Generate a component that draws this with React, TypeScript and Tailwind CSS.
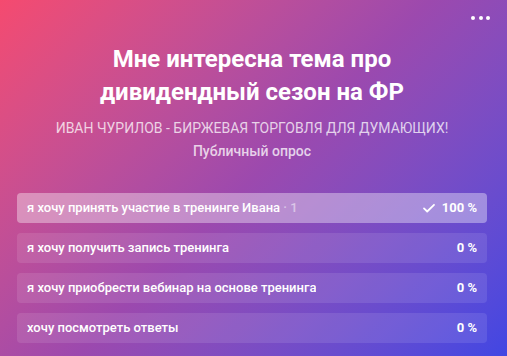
const OPTIONS: Array<{ text: string; votes?: number; percent: number; chosen?: boolean }> = [
  { text: "я хочу принять участие в тренинге Ивана", votes: 1, percent: 100, chosen: true },
  { text: "я хочу получить запись тренинга", percent: 0 },
  { text: "я хочу приобрести вебинар на основе тренинга", percent: 0 },
  { text: "хочу посмотреть ответы", percent: 0 },
];

function CheckIcon() {
  return (
    <svg width="14" height="14" viewBox="0 0 14 14" fill="none" className="shrink-0">
      <path d="M2 7.4l3.2 3.1L12 3.8" stroke="white" strokeWidth="1.8" strokeLinecap="round" strokeLinejoin="round" />
    </svg>
  );
}

export default function App() {
  return (
    <div
      className="relative flex h-[356px] w-[507px] flex-col overflow-hidden bg-linear-135 from-[#f54a6f] via-[#9c49ae] to-[#4146e3] pl-[17px] pr-[20px] text-white"
      style={{ fontFamily: "Roboto, 'Noto Sans', sans-serif" }}
    >
      {/* menu */}
      <button className="absolute right-[17px] top-[16px] flex gap-[3.5px]">
        <span className="h-[4px] w-[4px] rounded-full bg-white" />
        <span className="h-[4px] w-[4px] rounded-full bg-white" />
        <span className="h-[4px] w-[4px] rounded-full bg-white" />
      </button>

      <div className="flex flex-col items-center pt-[43px] text-center">
        <h1 className="text-[24px] font-bold leading-[33px]">
          Мне интересна тема про
          <br />
          дивидендный сезон на ФР
        </h1>
        <p className="mt-[10px] text-[14px] leading-[18px] text-white/75">
          ИВАН ЧУРИЛОВ - БИРЖЕВАЯ ТОРГОВЛЯ ДЛЯ ДУМАЮЩИХ!
        </p>
        <p className="mt-[5px] text-[14px] font-medium leading-[18px] text-white/75">Публичный опрос</p>
      </div>

      <div className="mt-[33px] flex flex-col gap-[10px]">
        {OPTIONS.map((o, i) => (
          <div key={i} className="relative h-[30px] overflow-hidden rounded-[4px] bg-white/10">
            <div
              className="absolute inset-y-0 left-0 bg-white/30"
              style={{ width: `${o.percent}%` }}
            />
            <div className="relative flex h-full items-center justify-between px-[10px] text-[13px] font-medium">
              <span className="truncate">
                {o.text}
                {o.votes !== undefined && <span className="text-white/50"> · {o.votes}</span>}
              </span>
              <span className="flex items-center gap-[6px] font-bold">
                {o.chosen && <CheckIcon />}
                {o.percent} %
              </span>
            </div>
          </div>
        ))}
      </div>
    </div>
  );
}
